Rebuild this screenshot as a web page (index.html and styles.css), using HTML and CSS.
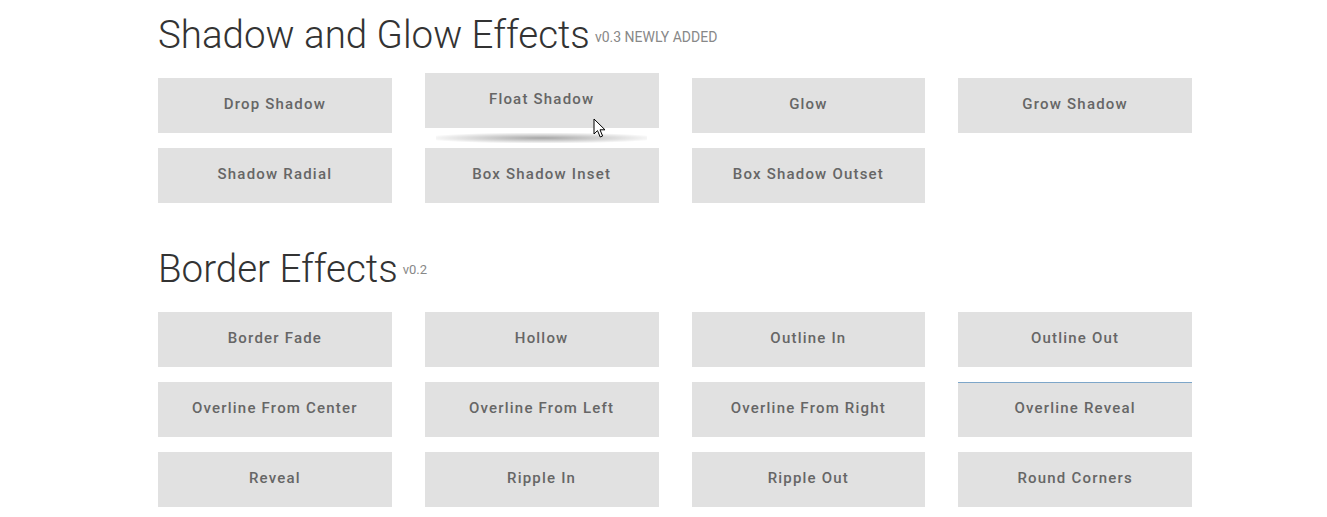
FILE: index.html
```html
<!DOCTYPE html>
<html>
<head>
<meta charset="utf-8">
<link rel="stylesheet" href="styles.css">
</head>
<body>
<main class="page">
  <section class="section">
    <h2 class="title">Shadow and Glow Effects<small class="tag">v0.3 NEWLY ADDED</small></h2>
    <div class="grid">
      <a class="btn">Drop Shadow</a>
      <a class="btn btn-float">Float Shadow
        <svg class="cursor" width="14" height="21" viewBox="0 0 14 21"><path d="M1 1 L1 16 L4.5 12.6 L7.2 19 L9.6 18 L7 11.8 L12 11.8 Z" fill="#fff" stroke="#000" stroke-width="1" stroke-linejoin="miter"/></svg>
      </a>
      <a class="btn">Glow</a>
      <a class="btn">Grow Shadow</a>
      <a class="btn">Shadow Radial</a>
      <a class="btn">Box Shadow Inset</a>
      <a class="btn">Box Shadow Outset</a>
    </div>
  </section>
  <section class="section section-border">
    <h2 class="title">Border Effects<small class="tag tag-sm">v0.2</small></h2>
    <div class="grid">
      <a class="btn">Border Fade</a>
      <a class="btn">Hollow</a>
      <a class="btn">Outline In</a>
      <a class="btn">Outline Out</a>
      <a class="btn">Overline From Center</a>
      <a class="btn">Overline From Left</a>
      <a class="btn">Overline From Right</a>
      <a class="btn btn-overline">Overline Reveal</a>
      <a class="btn">Reveal</a>
      <a class="btn">Ripple In</a>
      <a class="btn">Ripple Out</a>
      <a class="btn">Round Corners</a>
    </div>
  </section>
</main>
</body>
</html>
```

FILE: styles.css
```css
html, body {
  margin: 0;
  padding: 0;
  background: #fff;
}
body {
  font-family: Roboto, "Liberation Sans", sans-serif;
  overflow: hidden;
}
.page {
  padding-left: 158px;
  width: 1034px;
}
.section {
  padding-top: 12px;
}
.title {
  margin: 0;
  font-weight: 300;
  font-size: 38.5px;
  line-height: 45px;
  color: #333;
  white-space: nowrap;
}
.tag {
  font-size: 14px;
  font-weight: 400;
  color: #888;
  vertical-align: 6px;
  margin-left: 5px;
  line-height: 1;
}
.tag-sm {
  font-size: 13px;
  vertical-align: 8px;
}
.grid {
  display: grid;
  grid-template-columns: repeat(4, 1fr);
  column-gap: 33px;
  row-gap: 15px;
  margin-top: 21px;
}
.btn {
  position: relative;
  display: flex;
  align-items: center;
  justify-content: center;
  height: 55px;
  box-sizing: border-box;
  padding-bottom: 4px;
  background: #e1e1e1;
  color: #666;
  font-size: 15px;
  font-weight: 500;
  letter-spacing: 1.2px;
  cursor: pointer;
}
.btn-float {
  transform: translateY(-5px);
}
.btn-float::before {
  content: "";
  position: absolute;
  top: 100%;
  left: 5%;
  width: 90%;
  height: 10px;
  transform: translateY(5px);
  background: radial-gradient(ellipse at center, rgba(0,0,0,0.35) 0%, rgba(0,0,0,0) 80%);
}
.cursor {
  position: absolute;
  left: 168px;
  top: 45px;
}
.btn-overline::before {
  content: "";
  position: absolute;
  top: 0;
  left: 0;
  right: 0;
  height: 1px;
  background: #7da6c9;
}
.section-border {
  margin-top: 31px;
}
```
